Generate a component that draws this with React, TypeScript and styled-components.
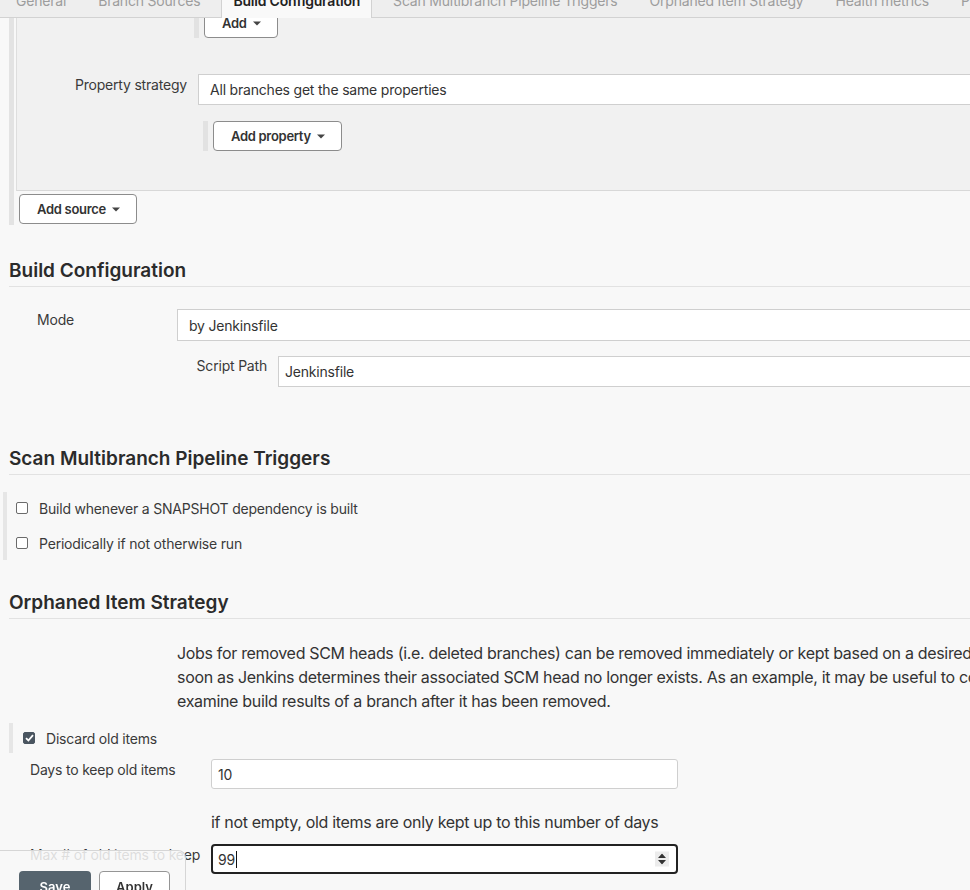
import React from "react";
import styled, { createGlobalStyle, css } from "styled-components";

const GlobalStyle = createGlobalStyle`
  html, body {
    margin: 0;
    padding: 0;
    background: #f8f8f8;
    overflow: hidden;
  }
  body {
    font-family: Inter, "Noto Sans", "Liberation Sans", sans-serif;
    color: #333;
    letter-spacing: -0.2px;
    -webkit-font-smoothing: antialiased;
  }
`;

const Page = styled.div`
  width: 970px;
  height: 890px;
  overflow: hidden;
  position: relative;
`;

/* ---------- tab bar (page is scrolled, only the bottom of it shows) ---------- */

const TabBar = styled.div`
  position: relative;
  z-index: 2;
  height: 18px;
  box-sizing: border-box;
  display: flex;
  align-items: flex-end;
  background: #eeeeee;
  border-bottom: 1px solid #d2d2d2;
  white-space: nowrap;
`;

const Tab = styled.div<{ $active?: boolean }>`
  font-size: 14px;
  line-height: 20px;
  padding: 0 16px 6px;
  color: #9d9d9d;
  ${({ $active }) =>
    $active &&
    css`
      margin: 0 5px -1px;
      padding: 0 11px 7px;
      background: #f9f9f9;
      border-left: 1px solid #d2d2d2;
      border-right: 1px solid #d2d2d2;
      color: #222;
      font-weight: 600;
    `}
`;

/* ---------- shared controls ---------- */

const Stripe = styled.div`
  width: 5px;
  align-self: stretch;
  background: #e2e2e2;
  flex-shrink: 0;
`;

const RepeatRow = styled.div<{ $indent: number; $top: number }>`
  display: flex;
  gap: 5px;
  margin-left: ${({ $indent }) => $indent}px;
  margin-top: ${({ $top }) => $top}px;
`;

const Button = styled.button`
  height: 30px;
  box-sizing: border-box;
  display: inline-flex;
  align-items: center;
  gap: 6px;
  padding: 0 16px 0 17px;
  background: #fff;
  border: 1.5px solid #8c8c8c;
  border-radius: 4px;
  font-family: inherit;
  font-size: 13px;
  font-weight: 600;
  letter-spacing: -0.3px;
  color: #333;
  cursor: pointer;
`;

const Caret = () => (
  <svg width="8" height="5" viewBox="0 0 8 5">
    <path d="M0 0.5h8L4 4.5z" fill="#444" />
  </svg>
);

const Select = styled.div<{ $tall?: boolean }>`
  height: ${({ $tall }) => ($tall ? 32 : 31)}px;
  box-sizing: border-box;
  display: flex;
  align-items: center;
  padding: 0 11px;
  margin-right: -40px;
  background: #fff;
  border: 1px solid #cfcfcf;
  font-size: 14px;
  white-space: nowrap;
`;

const TextBox = styled.div<{ $focused?: boolean; $wide?: boolean }>`
  position: relative;
  height: ${({ $wide }) => ($wide ? 31 : 30)}px;
  box-sizing: border-box;
  display: flex;
  align-items: center;
  padding: 0 6px;
  background: #fff;
  border: 1px solid #cfcfcf;
  font-size: 14px;
  ${({ $wide }) =>
    $wide
      ? css`
          margin-right: -40px;
        `
      : css`
          border-radius: 3px;
        `}
  ${({ $focused }) =>
    $focused &&
    css`
      border: 2px solid #222;
      border-radius: 4px;
      padding: 0 5px;
    `}
`;

const TextCaret = styled.span`
  display: inline-block;
  width: 1px;
  height: 17px;
  margin-left: 1px;
  background: #111;
`;

const Spinner = styled.span`
  position: absolute;
  right: 7px;
  top: 50%;
  transform: translateY(-50%);
  width: 14px;
  height: 15px;
  display: flex;
  align-items: center;
  justify-content: center;
  background: #ececec;
`;

const CheckBox = styled.span<{ $checked?: boolean }>`
  width: 12px;
  height: 12px;
  box-sizing: border-box;
  flex-shrink: 0;
  display: inline-flex;
  align-items: center;
  justify-content: center;
  border-radius: 2px;
  border: 1px solid ${({ $checked }) => ($checked ? "#4a5560" : "#6b6b6b")};
  background: ${({ $checked }) => ($checked ? "#4a5560" : "#fff")};
`;

const Label = styled.div<{ $align?: "left" | "right"; $nudge?: number }>`
  font-size: 14px;
  line-height: 20px;
  color: #3a3a3a;
  white-space: nowrap;
  padding-top: ${({ $nudge }) => $nudge ?? 0}px;
  text-align: ${({ $align }) => $align ?? "left"};
`;

/* ---------- branch source block ---------- */

const SourceRepeat = styled.div`
  margin-left: 9px;
  border-left: 5px solid #e3e3e3;
  padding: 0 0 1px 2px;
`;

const SourcePanel = styled.div`
  display: flex;
  flex-direction: column;
  background: #f1f1f1;
  border-left: 1px solid #dedede;
  border-bottom: 1px solid #d8d8d8;
  height: 173px;
  box-sizing: border-box;
`;

const PropertyRow = styled.div`
  display: grid;
  grid-template-columns: 170px 1fr;
  column-gap: 11px;
  margin-top: 36px;
  align-items: start;
`;

const SourceFooter = styled.div`
  margin: 3px 0 0 3px;
`;

/* ---------- sections ---------- */

const SectionTitle = styled.h2<{ $top: number }>`
  margin: ${({ $top }) => $top}px 0 0 9px;
  padding-bottom: 3px;
  font-size: 19px;
  line-height: 24px;
  font-weight: 600;
  letter-spacing: 0;
  color: #2b2b2b;
  border-bottom: 1px solid #e2e2e2;
  white-space: nowrap;
`;

const FieldRow = styled.div<{ $left: number; $label: number; $top: number; $gap?: number; $field?: number }>`
  display: grid;
  grid-template-columns: ${({ $label, $field }) => `${$label}px ${$field ? `${$field}px` : "1fr"}`};
  column-gap: ${({ $gap }) => $gap ?? 0}px;
  padding-left: ${({ $left }) => $left}px;
  margin-top: ${({ $top }) => $top}px;
  align-items: start;
`;

const CheckGroup = styled.div<{ $left: number; $top: number }>`
  display: flex;
  flex-direction: column;
  gap: 15px;
  margin: ${({ $top }) => $top}px 0 0 ${({ $left }) => $left}px;
  padding: 6px 0 7px 9px;
  border-left: 4px solid #e6e6e6;
`;

const CheckRow = styled.label`
  display: flex;
  align-items: center;
  gap: 11px;
  height: 20px;
  font-size: 14px;
  color: #3a3a3a;
  white-space: nowrap;
`;

const DiscardGroup = styled(CheckGroup)`
  padding: 0 0 0 10px;
  height: 30px;
  justify-content: center;
`;

const Paragraph = styled.p<{ $left: number; $top: number }>`
  margin: ${({ $top }) => $top}px 0 0 ${({ $left }) => $left}px;
  font-size: 16px;
  line-height: 24px;
  letter-spacing: -0.32px;
  color: #333;
  white-space: nowrap;
`;

/* ---------- floating save bar ---------- */

const SaveBar = styled.div`
  position: fixed;
  left: 0;
  top: 850px;
  width: 186px;
  height: 60px;
  box-sizing: border-box;
  display: flex;
  gap: 8px;
  padding: 20px 0 0 19px;
  background: rgba(248, 248, 248, 0.86);
  border: 1px solid #d6d6d6;
  border-left: none;
  border-bottom: none;
  border-top-right-radius: 8px;
  z-index: 3;
`;

const SaveButton = styled.button<{ $primary?: boolean }>`
  width: ${({ $primary }) => ($primary ? 72 : 71)}px;
  height: 32px;
  box-sizing: border-box;
  border-radius: 4px;
  font-family: inherit;
  font-size: 13px;
  font-weight: 600;
  ${({ $primary }) =>
    $primary
      ? css`
          background: #56646e;
          border: none;
          color: #fff;
        `
      : css`
          background: #fff;
          border: 1.5px solid #959595;
          color: #333;
        `}
`;

const tabs = [
  "General",
  "Branch Sources",
  "Build Configuration",
  "Scan Multibranch Pipeline Triggers",
  "Orphaned Item Strategy",
  "Health metrics",
  "Properties",
];

export default function App() {
  return (
    <Page>
      <GlobalStyle />
      <TabBar>
        {tabs.map((t) => (
          <Tab key={t} $active={t === "Build Configuration"}>
            {t}
          </Tab>
        ))}
      </TabBar>

      <SourceRepeat>
        <SourcePanel>
          <RepeatRow $indent={177} $top={-10}>
            <Stripe />
            <Button>
              Add <Caret />
            </Button>
          </RepeatRow>
          <PropertyRow>
            <Label $align="right" $nudge={1}>
              Property strategy
            </Label>
            <Select>All branches get the same properties</Select>
          </PropertyRow>
          <RepeatRow $indent={186} $top={16}>
            <Stripe />
            <Button>
              Add property <Caret />
            </Button>
          </RepeatRow>
        </SourcePanel>
        <SourceFooter>
          <Button>
            Add source <Caret />
          </Button>
        </SourceFooter>
      </SourceRepeat>

      <SectionTitle $top={34}>Build Configuration</SectionTitle>
      <FieldRow $left={37} $label={140} $top={22}>
        <Label $nudge={1}>Mode</Label>
        <Select $tall>by Jenkinsfile</Select>
      </FieldRow>
      <FieldRow $left={177} $label={90} $gap={11} $top={15}>
        <Label $align="right">Script Path</Label>
        <TextBox $wide>Jenkinsfile</TextBox>
      </FieldRow>

      <SectionTitle $top={60}>Scan Multibranch Pipeline Triggers</SectionTitle>
      <CheckGroup $left={3} $top={17}>
        <CheckRow>
          <CheckBox />
          Build whenever a SNAPSHOT dependency is built
        </CheckRow>
        <CheckRow>
          <CheckBox />
          Periodically if not otherwise run
        </CheckRow>
      </CheckGroup>

      <SectionTitle $top={31}>Orphaned Item Strategy</SectionTitle>
      <Paragraph $left={177} $top={22}>
        Jobs for removed SCM heads (i.e. deleted branches) can be removed immediately or kept based on a desired
        retention strategy. By default, jobs will be removed as
        <br />
        soon as Jenkins determines their associated SCM head no longer exists. As an example, it may be useful to
        configure a retention strategy in order to
        <br />
        examine build results of a branch after it has been removed.
      </Paragraph>
      <DiscardGroup $left={9} $top={10}>
        <CheckRow>
          <CheckBox $checked>
            <svg width="9" height="8" viewBox="0 0 9 8">
              <path d="M1 4.2l2.4 2.3L8 1.2" stroke="#fff" strokeWidth="1.8" fill="none" />
            </svg>
          </CheckBox>
          Discard old items
        </CheckRow>
      </DiscardGroup>
      <FieldRow $left={30} $label={181} $field={467} $top={6}>
        <Label $nudge={1}>Days to keep old items</Label>
        <TextBox>10</TextBox>
      </FieldRow>
      <Paragraph $left={211} $top={21}>
        if not empty, old items are only kept up to this number of days
      </Paragraph>
      <FieldRow $left={30} $label={181} $field={467} $top={10}>
        <Label $nudge={1}>Max # of old items to keep</Label>
        <TextBox $focused>
          99
          <TextCaret />
          <Spinner>
            <svg width="8" height="11" viewBox="0 0 8 11">
              <path d="M0 4.5h8L4 0z M0 6.5h8L4 11z" fill="#333" />
            </svg>
          </Spinner>
        </TextBox>
      </FieldRow>

      <SaveBar>
        <SaveButton $primary>Save</SaveButton>
        <SaveButton>Apply</SaveButton>
      </SaveBar>
    </Page>
  );
}
